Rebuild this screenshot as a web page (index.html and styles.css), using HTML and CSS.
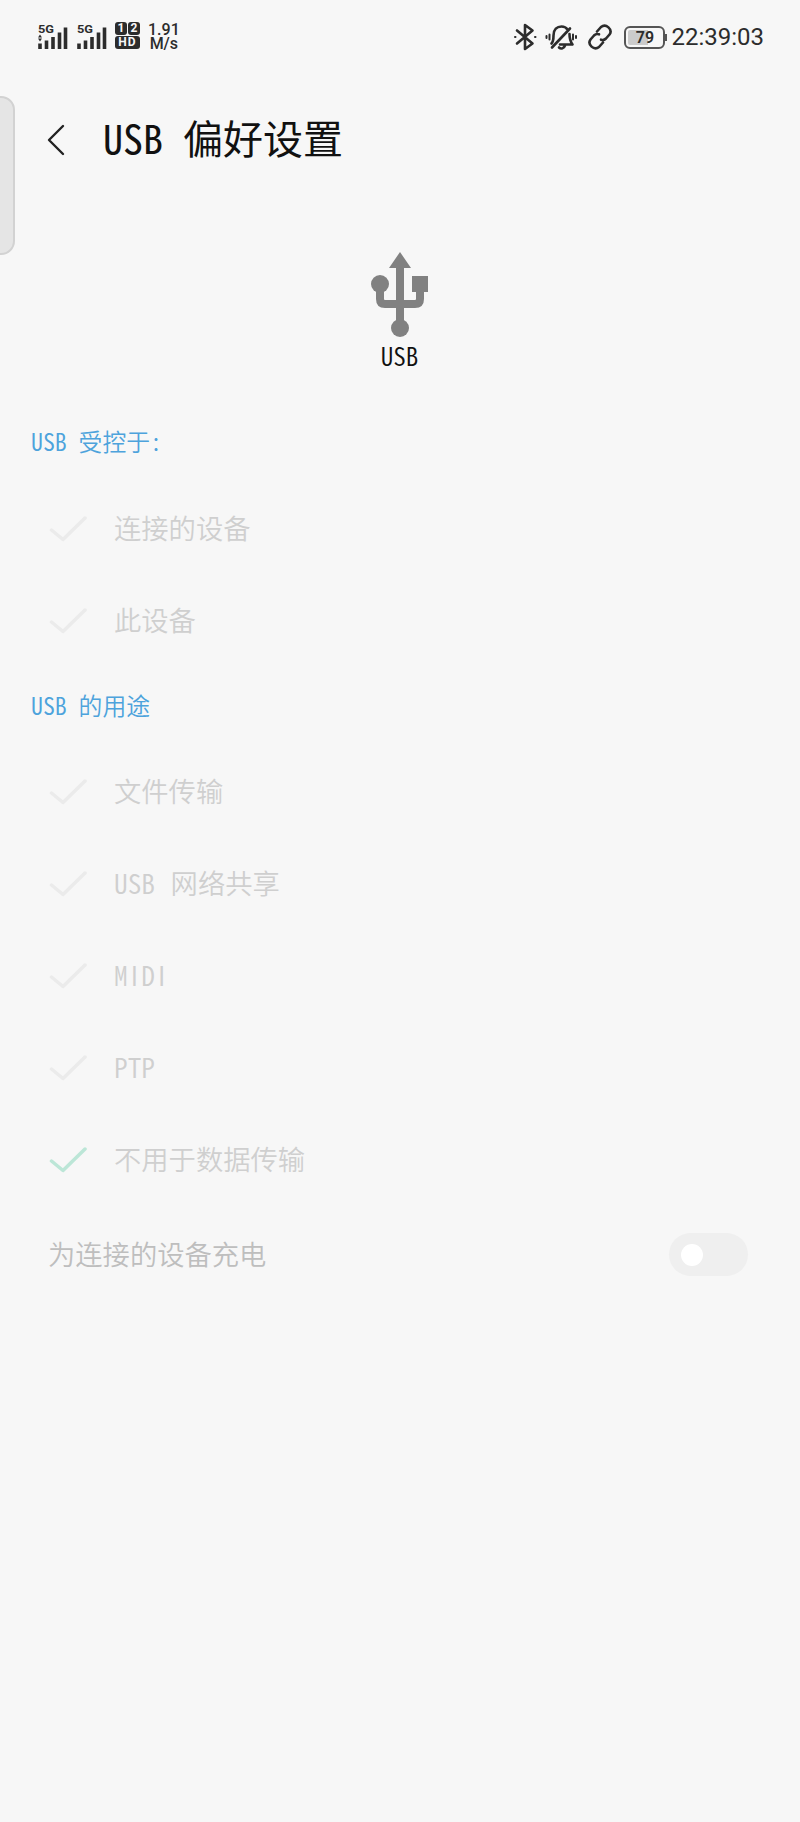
FILE: index.html
```
<!DOCTYPE HTML>
<html lang="zh-CN">
<head>
<meta charset="utf-8">
<title>USB 偏好设置</title>
<link rel="stylesheet" href="styles.css">
</head>

<body>
	<svg class="defs">
		<symbol id="check" viewBox="0 0 38 26"><path d="M2.500 14l11.500 9.500L36 2"/></symbol>
	</svg>
	<div class="side"></div>
	<div class="status">
		<div class="status-l">
			<svg class="signal" width="30" height="28" viewBox="0 0 30 28">
				<text x="0" y="9.500" textLength="16" lengthAdjust="spacingAndGlyphs">5G</text>
				<path d="M2 20.500v5.500M8.500 17.500V26M15 14V26M21.500 9.500V26M27.500 4.500V26"/>
				<path class="dot" d="M0 14.500l2-3 2 3zM0 15.500l2 3 2-3z"/>
			</svg>
			<svg class="signal" width="30" height="28" viewBox="0 0 30 28">
				<text x="0" y="9.500" textLength="16" lengthAdjust="spacingAndGlyphs">5G</text>
				<path d="M2 20.500v5.500M8.500 17.500V26M15 14V26M21.500 9.500V26M27.500 4.500V26"/>
			</svg>
			<div class="hd"><b>1</b><b>2</b><b class="wide">HD</b></div>
			<div class="speed"><p>1.91</p><p>M/s</p></div>
		</div>
		<div class="status-r">
			<svg class="ico" width="24" height="28" viewBox="0 0 24 28">
				<path d="M4 7.500l15.500 13L12 26V2l7.500 5.500L4 20.500"/>
				<path class="thin" d="M2 14h.5M22 14h.5"/>
			</svg>
			<svg class="ico bell" width="32" height="28" viewBox="0 0 32 28">
				<path d="M6.500 20.500c2-2 2-4.500 2-8 0-6 3.500-9 8-9 3 0 5 1.500 6 3M24.500 11c0 5 .5 7 3 10.500H15M7 24.500L25 5.500M14 24.500c2 2 5 1 6-2"/>
				<path class="thin" d="M1.500 13v2M4.500 11.500v5M28 11.500v5M31 13v2"/>
			</svg>
			<svg class="ico link" width="26" height="26" viewBox="0 0 26 26">
				<path d="M10 7.500l4-4.500c5-4 12 2.500 8.500 7.500L19 14.500c-1.500 1.500-3.500 1.800-5 1.200M16 18.500l-4 4.500c-5 4-12-2.500-8.500-7.500L7 11.500c1.500-1.500 3.500-1.800 5-1.200"/>
			</svg>
			<div class="battery"><span>79</span></div>
			<span class="time">22:39:03</span>
		</div>
	</div>
	<div class="title">
		<svg width="18" height="32" viewBox="0 0 18 32"><path d="M16 2L2 16l14 14"/></svg>
		<h1>USB 偏好设置</h1>
	</div>
	<div class="usb">
		<svg width="58" height="86" viewBox="0 0 58 86">
			<path d="M29 0l11 16H18z"/>
			<path d="M41 24h16v16H41z"/>
			<circle cx="9" cy="32" r="9"/>
			<circle cx="29" cy="76" r="9"/>
			<path class="line" d="M29 14v60M9 32v15q0 5 5 5h30q5 0 5-5V38"/>
		</svg>
		<p>USB</p>
	</div>
	<h2>USB 受控于:</h2>
	<ul>
		<li><svg><use href="#check"/></svg><span>连接的设备</span></li>
		<li><svg><use href="#check"/></svg><span>此设备</span></li>
	</ul>
	<h2>USB 的用途</h2>
	<ul>
		<li><svg><use href="#check"/></svg><span>文件传输</span></li>
		<li><svg><use href="#check"/></svg><span class="gap">USB 网络共享</span></li>
		<li><svg><use href="#check"/></svg><span>M<i>I</i>D<i>I</i></span></li>
		<li><svg><use href="#check"/></svg><span>PTP</span></li>
		<li class="on"><svg><use href="#check"/></svg><span>不用于数据传输</span></li>
	</ul>
	<div class="charge">
		<span>为连接的设备充电</span>
		<div class="switch"></div>
	</div>
</body>
</html>
```
FILE: styles.css
```
*{padding:0;margin:0;list-style:none;box-sizing:border-box}
body{width:800px;height:1822px;overflow:hidden;background:#f7f7f7;font-family:"Noto Sans CJK SC",sans-serif;font-weight:350;font-feature-settings:"hwid";color:#111;position:relative;}
svg{display:block;flex:none;fill:none;stroke-linecap:round;stroke-linejoin:round;}
.defs{position:absolute;width:0;height:0;}
/* 左侧边缘条 */
.side{position:absolute;left:-20px;top:96px;width:35px;height:159px;background:#e5e5e5;border:2px solid #d2d2d2;border-radius:14px;}

.status{height:74px;padding:0 36px 0 38px;display:flex;justify-content:space-between;align-items:center;font-family:Roboto,sans-serif;font-weight:400;font-feature-settings:normal;color:#2c2c2c;}
.status-l,.status-r{display:flex;align-items:center;}
.signal{margin-right:9px;stroke:#2c2c2c;stroke-width:3.6;}
.signal path{stroke-linecap:butt;}
.signal text,.signal .dot{fill:#2c2c2c;stroke:none;font:bold 11.5px Roboto,sans-serif;}
.hd{width:25px;display:grid;grid-template-columns:12px 12px;gap:1px;margin:-3px 8px 0 -1px;}
.hd b{height:13px;line-height:13px;font-size:12px;text-align:center;background:#2c2c2c;color:#f7f7f7;border-radius:3px;}
.hd .wide{grid-column:1/3;letter-spacing:1px;}
.speed{font-size:16px;font-weight:500;text-align:center;}
.speed p{line-height:14px;}
.ico{stroke:#2c2c2c;stroke-width:2.6;}
.ico .thin{stroke-width:2;}
.bell{margin-left:8px;}
.link{margin:-1px 11px 0 10px;}
.battery{position:relative;width:41px;height:23px;padding:2px;border:2px solid #555;border-radius:6px;font-size:16px;font-weight:600;line-height:15px;text-align:center;}
.battery span{display:block;height:15px;background:linear-gradient(90deg,#cbcbcb 60%,transparent 60%);border-radius:2px;}
.battery:after{content:"";position:absolute;right:-4px;top:6px;width:2px;height:7px;background:#555;}
.time{margin-left:6px;font-size:24px;}

.title{height:132px;padding-left:47px;display:flex;align-items:center;}
.title svg{stroke:#222;stroke-width:2.4;}
.title h1{margin-left:38px;padding-bottom:6px;font-size:40px;font-weight:400;line-height:60px;}

.usb{height:196px;padding:46px 1px 0 0;display:flex;flex-direction:column;align-items:center;}
.usb svg{fill:#818181;}
.usb .line{fill:none;stroke:#818181;stroke-width:8;stroke-linecap:butt;}
.usb p{font-size:25px;line-height:34px;}

h2{height:80px;line-height:78px;padding-left:31px;font-size:23.8px;font-weight:350;color:#4da3dc;}
li{height:91.8px;padding:2px 0 0 49px;display:flex;align-items:center;font-size:27.3px;color:#cfcfcf;}
li svg{width:38px;height:26px;margin-right:27px;stroke:#ebebeb;stroke-width:3.5;}
li span{padding-bottom:4px;}
li .gap{word-spacing:2px;}
li i{display:inline-block;width:.5em;font-style:normal;font-feature-settings:normal;text-align:center;}
.on svg{stroke:#bce6d7;}
.charge{height:98px;padding:2px 52px 0 48px;display:flex;justify-content:space-between;align-items:center;font-size:27.3px;color:#bebebe;}
.charge span{padding-bottom:3px;}
.switch{width:79px;height:43px;padding:11px 12px;background:#efefef;border-radius:22px;}
.switch:before{content:"";display:block;width:22px;height:22px;border-radius:50%;background:#fff;}
```
